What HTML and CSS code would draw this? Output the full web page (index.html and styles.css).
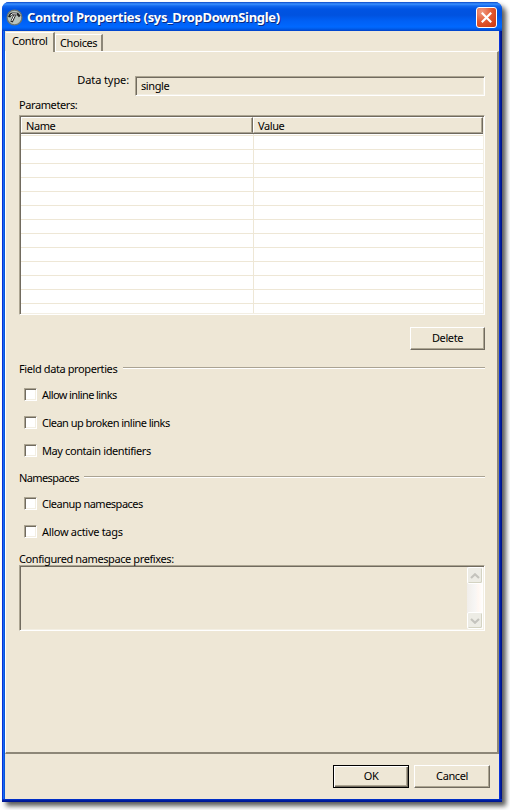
FILE: index.html
```html
<!DOCTYPE html>
<html lang="en">
<head>
<meta charset="utf-8">
<title>Control Properties</title>
<link rel="stylesheet" href="styles.css">
</head>
<body>
<main class="window">
  <header class="titlebar">
    <svg class="app-icon" width="17" height="17" viewBox="0 0 17 17">
      <circle cx="8.500" cy="8.500" r="7.400" fill="#b9c4bd" stroke="#6b756f" stroke-width="1.200"/>
      <path d="M3.200 8.200C3.800 6 5 4.800 7 4.800L11.500 5 13.800 7.500" fill="none" stroke="#222" stroke-width="2.400"/>
      <path d="M8.800 6 5.500 13" stroke="#222" stroke-width="2.600"/>
      <path d="M4.500 6.300 6.500 4.800 11 5M8.500 6.500 5.800 12" fill="none" stroke="#fff" stroke-width="1"/>
    </svg>
    <h1 class="title">Control Properties (sys_DropDownSingle)</h1>
    <button class="close" aria-label="Close"><svg width="11" height="11" viewBox="0 0 11 11"><path d="M.8.800 10.200 10.200M10.200.800.800 10.200" stroke="#fff" stroke-width="2.200"/></svg></button>
  </header>
  <div class="client">
    <nav class="tabs">
      <span class="tab active">Control</span>
      <span class="tab choices">Choices</span>
    </nav>
    <section class="panel">
      <div class="type-row"><label class="type-label">Data type:</label><div class="field">single</div></div>
      <div class="caption params">Parameters:</div>
      <div class="list">
        <div class="list-head"><span class="col first">Name</span><span class="col">Value</span></div>
        <div class="list-body"></div>
      </div>
      <div class="list-actions"><button class="btn delete">Delete</button></div>
      <div class="group"><span class="data-title">Field data properties</span><i class="rule"></i></div>
      <div class="checks data-checks">
        <label class="check"><i class="box"></i><span class="c1">Allow inline links</span></label>
        <label class="check"><i class="box"></i><span class="c2">Clean up broken inline links</span></label>
        <label class="check"><i class="box"></i><span class="c3">May contain identifiers</span></label>
      </div>
      <div class="group"><span class="ns-title">Namespaces</span><i class="rule"></i></div>
      <div class="checks ns-checks">
        <label class="check"><i class="box"></i><span class="c4">Cleanup namespaces</span></label>
        <label class="check"><i class="box"></i><span class="c5">Allow active tags</span></label>
      </div>
      <div class="caption prefixes">Configured namespace prefixes:</div>
      <div class="area">
        <div class="scroll">
          <span class="arrow"><svg width="10" height="6" viewBox="0 0 10 6"><path d="M1 5 5 1.300 9 5" fill="none" stroke="#c4c3bd" stroke-width="2.200"/></svg></span>
          <span class="arrow"><svg width="10" height="6" viewBox="0 0 10 6"><path d="M1 1 5 4.700 9 1" fill="none" stroke="#c4c3bd" stroke-width="2.200"/></svg></span>
        </div>
      </div>
    </section>
    <footer class="footer"><button class="btn ok">OK</button><button class="btn cancel">Cancel</button></footer>
  </div>
</main>
</body>
</html>
```
FILE: styles.css
```css
* { box-sizing: border-box; }
body {
  margin: 0;
  padding: 2px;
  width: 510px;
  height: 810px;
  overflow: hidden;
  background: #fff;
  color: #000;
  font: 11px/14px Tahoma, "Noto Sans", "Open Sans", sans-serif;
  letter-spacing: -.4px;
}
button { font: inherit; color: inherit; letter-spacing: inherit; padding: 0; margin: 0; }
.window {
  width: 500px;
  height: 800px;
  padding: 0 3px 3px;
  border-radius: 7px 7px 0 0;
  background:
    linear-gradient(#0036d8, #001ea0 50%, #00138c) 0 100% / 100% 3px no-repeat,
    linear-gradient(90deg, #0831d9 0 1px, #166aee 1px 2px, #0855dd 2px 3px, #0036d8 3px 497px, #0831d9 497px 498px, #001ea0 498px 499px, #00138c 499px);
  box-shadow: 4px 4px 5px rgba(0, 0, 0, .65);
}
.titlebar {
  display: flex;
  align-items: center;
  height: 29px;
  margin: 0 -3px;
  padding: 1px 5px 0 4px;
  border-radius: 7px 7px 0 0;
  background: linear-gradient(#0a48c8 0, #3a90ff 2px, #1268ee 4px, #0054e3 7px, #0052df 13px, #0060f5 19px, #0068ff 25px, #005be8 27px, #0040c8 29px);
}
.title {
  margin: 0 auto 0 4px;
  color: #fff;
  font: bold 13px/18px "Trebuchet MS", "Noto Sans", sans-serif;
  letter-spacing: -.3px;
  white-space: nowrap;
  text-shadow: 1px 1px #0a2a80;
}
.close {
  display: flex;
  align-items: center;
  justify-content: center;
  width: 21px;
  height: 21px;
  border: 1px solid #fff;
  border-radius: 3px;
  background: radial-gradient(circle at 25% 20%, #f09a80, #e2572f 50%, #c9350d);
}
.client { height: 768px; background: #eee7d6; }
.tabs { display: flex; align-items: flex-end; height: 20px; padding-left: 1px; }
.tab { position: relative; height: 17px; padding: 1px 0 0 4px; border-top: 1px solid #fff; border-left: 1px solid #fff; border-right: 2px solid #8d8778; }
.tab.active { z-index: 1; width: 49px; height: 20px; padding: 1px 0 0 6px; margin-bottom: -1px; border-left: 0; background: #eee7d6; }
.choices { width: 48px; }
.panel {
  height: 703px;
  padding: 24px 12px 0 13px;
  border-style: solid;
  border-width: 1px 2px 2px 1px;
  border-color: #fff #8d8778 #8d8778 #fff;
}
.type-row { display: flex; align-items: flex-start; height: 19px; }
.type-label { width: 116px; padding: 0 6px 0 0; margin-top: -3px; text-align: right; letter-spacing: -.1px; }
.field, .area, .list, .box {
  border: 1px solid;
  border-color: #aca592 #fff #fff #aca592;
  box-shadow: inset 1px 1px #716b5f, inset -1px -1px #f3efe4;
  padding: 1px;
}
.field { flex: 1; height: 20px; padding: 2px 5px; }
.caption { height: 14px; white-space: nowrap; }
.params { margin-top: 3px; }
.list { height: 200px; margin: 3px 0 0; background: #fff; }
.list-head { display: flex; height: 17px; background: #eee7d6; border-bottom: 1px solid #6e695e; }
.col { flex: 1; padding: 1px 0 0 4px; line-height: 14px; border: 1px solid #fff; border-right: 1px solid #716b5f; border-bottom-color: #aaa393; box-shadow: inset -1px 0 #aca592; }
.col.first { flex: 0 0 232px; }
.list-body {
  height: 179px;
  background:
    linear-gradient(#eee7d6, #eee7d6) 232px 0 / 1px 100% no-repeat,
    repeating-linear-gradient(#fff 0 1px, #eee7d6 1px 2px, #fff 2px 14px);
}
.list-actions { display: flex; justify-content: flex-end; margin-top: 12px; }
.btn {
  width: 75px;
  height: 23px;
  padding-bottom: 1px;
  border-style: solid;
  border-width: 1px;
  border-color: #fff #716b5f #716b5f #fff;
  background: #eee7d6;
  box-shadow: inset -1px -1px #aca592;
}
.group { display: flex; align-items: flex-start; height: 14px; margin-top: 12px; white-space: nowrap; }
.rule { flex: 1; height: 2px; margin: 5px 0 0 6px; border-top: 1px solid #aaa393; border-bottom: 1px solid #fff; }
.group span { flex: none; }
.data-title { width: 98px; }
.ns-title { width: 59px; letter-spacing: -.6px; }
.checks { display: flex; flex-direction: column; gap: 14px; padding-left: 5px; }
.data-checks { margin-top: 12px; }
.data-checks + .group { margin-top: 13px; }
.ns-checks { margin-top: 12px; }
.check { display: flex; gap: 5px; height: 14px; white-space: nowrap; }
.c1 { letter-spacing: -.6px; }
.c2 { letter-spacing: -.53px; }
.c4 { letter-spacing: -.5px; }
.c5 { letter-spacing: -.3px; }
.box { width: 13px; height: 13px; background: #fff; }
.prefixes { margin-top: 13px; }
.area { display: flex; justify-content: flex-end; height: 66px; margin-top: -1px; }
.scroll { display: flex; flex-direction: column; justify-content: space-between; width: 16px; background: linear-gradient(90deg, #f1eeea, #f7f6f5 50%, #fff7f2 70%, #fff); }
.arrow { display: flex; align-items: center; justify-content: center; height: 17px; border: 1px solid #fff; border-radius: 2px; background: #edece5; box-shadow: inset -1px -1px #d4d3c2; }
.footer { display: flex; justify-content: flex-end; gap: 5px; padding: 11px 9px 0 0; }
.ok { width: 76px; border: 1px solid #000; box-shadow: inset 1px 1px #fff, inset -1px -1px #716b5f, inset -2px -2px #aca592; }
.cancel { width: 76px; }
```
